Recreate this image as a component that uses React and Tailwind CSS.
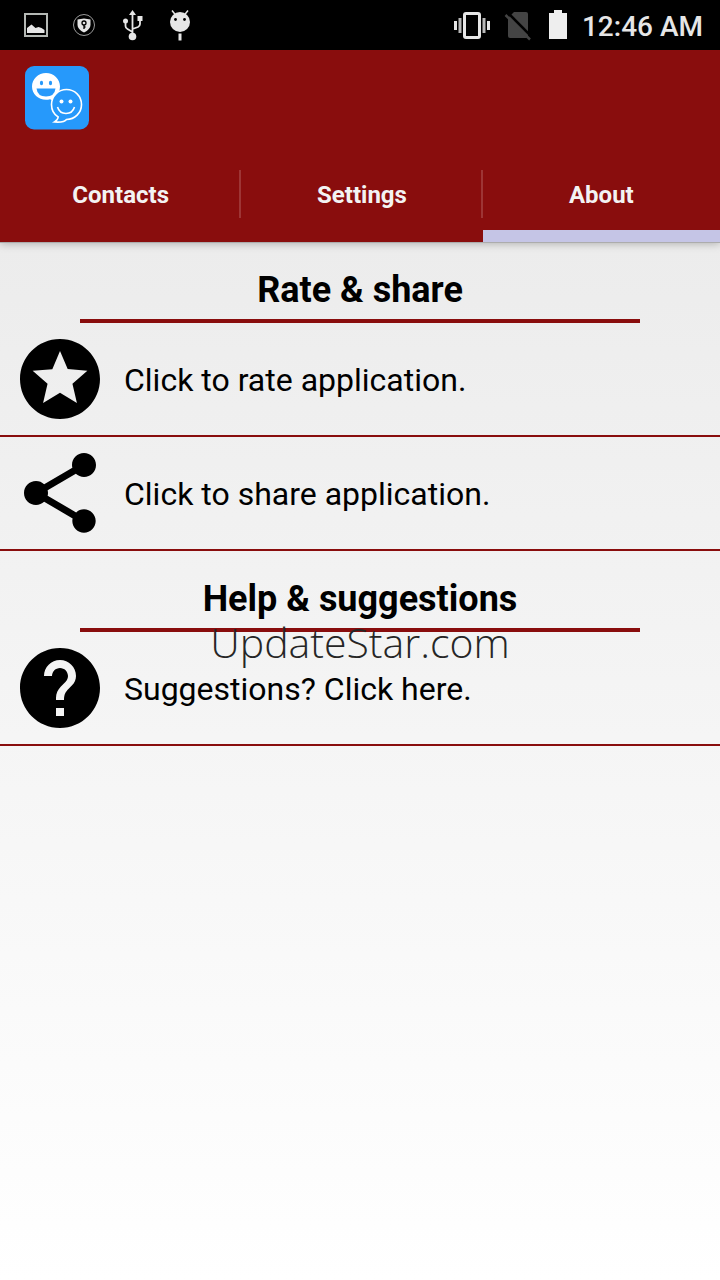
import React, { useState } from 'react';
import clsx from 'clsx';

const TABS = ['Contacts', 'Settings', 'About'];

const StatusBar = () => (
  <div className="flex h-[50px] items-center justify-between bg-black pr-[17px] pl-6 text-[#e6e6e6]">
    <div className="flex items-center gap-6">
      {/* picture */}
      <svg className="h-6 w-6" viewBox="0 0 24 24" fill="none">
        <rect x="1" y="1" width="22" height="22" stroke="#b4b8b4" strokeWidth="2" />
        <path d="M3 20v-5l4.500-3.500 4 3.500 3-1 3 1 3 2v3z" fill="currentColor" />
      </svg>
      {/* shield */}
      <svg className="h-6 w-6" viewBox="0 0 24 24" fill="none">
        <circle cx="12" cy="12" r="10.5" stroke="#9a9a9a" />
        <path d="M12 5.500l6.500 1v5c0 3.500-2.500 6-6.500 8-4-2-6.500-4.500-6.500-8v-5z" fill="currentColor" />
        <circle cx="12" cy="10" r="2" stroke="#000" strokeWidth="1.300" />
        <path d="M12 12v4M12 14h1.500" stroke="#000" strokeWidth="1.300" />
      </svg>
      {/* usb */}
      <svg className="h-8 w-6" viewBox="0 0 24 32" fill="none" stroke="currentColor" strokeWidth="1.800">
        <path d="M12.500 27V5M5.500 12v5q0 2 2 3l5 3M20 9v6q0 2-2 3l-5.500 2" />
        <path d="M12.500 1l3.500 5H9z" fill="currentColor" stroke="none" />
        <circle cx="5.500" cy="12" r="2.500" fill="currentColor" stroke="none" />
        <rect x="17.500" y="7" width="5" height="5" fill="currentColor" stroke="none" />
        <circle cx="12.500" cy="27.500" r="3.800" fill="currentColor" stroke="none" />
      </svg>
      {/* debug head */}
      <svg className="h-8 w-6" viewBox="0 0 24 32" fill="none" stroke="currentColor" strokeWidth="1.500">
        <circle cx="12" cy="13" r="10" fill="currentColor" stroke="none" />
        <path d="M4 1.500l4 5M20 1.500l-4 5" />
        <path d="M12 24.500v7" strokeWidth="3" />
        <circle cx="7.500" cy="10.500" r="1.400" fill="#000" stroke="none" />
        <circle cx="16.500" cy="10.500" r="1.400" fill="#000" stroke="none" />
      </svg>
    </div>
    <div className="flex items-center">
      {/* vibrate */}
      <svg className="h-8 w-9" viewBox="0 0 36 32" fill="none" stroke="currentColor">
        <rect x="10.500" y="4.500" width="15" height="24" rx="1.500" strokeWidth="3" />
        <path d="M1.500 12v9M34.500 12v9" strokeWidth="3" />
        <path d="M6 9v15M30 9v15" strokeWidth="3" stroke="#b8b8b8" />
      </svg>
      {/* no sim */}
      <svg className="ml-3.5 h-8 w-7" viewBox="0 0 28 32">
        <path d="M10 3h12q2 0 2 2v22q0 2-2 2H6q-2 0-2-2V9z" fill="#444" />
        <path d="M3.500 3.500l25 25" stroke="#000" strokeWidth="2.500" />
        <path d="M1.500 6l24.500 24.500" stroke="#444" strokeWidth="2.500" />
      </svg>
      {/* battery */}
      <svg className="ml-4 h-8 w-5" viewBox="0 0 20 32">
        <path d="M6 1h8v3h5v26H1V4h5z" fill="#eee" />
      </svg>
      <span className="ml-3.5 pt-1 text-[28px] leading-8 font-medium">12:46 AM</span>
    </div>
  </div>
);

const AppLogo = () => (
  <svg className="h-16 w-16" viewBox="0 0 64 64" fill="none">
    <rect width="64" height="63.500" rx="9" fill="#2699fb" />
    <path
      d="M21 7c7.800 0 14 6 14 13.500 0 4-1.500 7-3.800 9.300.2 2.500.8 4 2.300 5.700-4 0-6.500-1.200-8.500-2.300-1.300.5-2.600.6-4 .6C13.300 33.800 7 28 7 20.500S13.300 7 21 7z"
      fill="#fff"
    />
    <ellipse cx="16.500" cy="17" rx="1.600" ry="2.200" fill="#2699fb" />
    <ellipse cx="25.500" cy="17" rx="1.600" ry="2.200" fill="#2699fb" />
    <path d="M11.500 22.500h19q-1 8-9.500 8t-9.500-8z" fill="#2699fb" />
    <path
      d="M41.500 23.500c8.300 0 15 6.500 15 15s-6.700 15-15 15c-1.500 2-6 3-12 2.500 2.500-1.500 3.500-3 3.700-5-4.200-2.500-6.700-7.500-6.700-12.500 0-8.500 6.700-15 15-15z"
      fill="#2699fb"
      stroke="#fff"
      strokeWidth="1.600"
    />
    <circle cx="36.500" cy="35.500" r="2" fill="#fff" />
    <circle cx="45.500" cy="35.500" r="2" fill="#fff" />
    <path d="M32.500 41q2 6.500 8.500 6.500t8.500-6.500" stroke="#fff" strokeWidth="1.600" />
  </svg>
);

const SectionTitle = ({ children }) => (
  <h2 className="mx-20 border-b-4 border-[#890d0d] pt-7 pb-[9px] text-center text-[36px] leading-10 font-bold">
    {children}
  </h2>
);

const ActionRow = ({ path, children }) => (
  <button type="button" className="flex w-full items-center gap-4 border-b-2 border-[#890d0d] px-3 py-2 text-left">
    <svg className="h-24 w-24 shrink-0" viewBox="0 0 24 24" fill="currentColor">
      <path d={path} />
    </svg>
    <span className="pt-0.5 text-[32px] leading-9">{children}</span>
  </button>
);

const STAR =
  'M11.990 2C6.470 2 2 6.480 2 12s4.470 10 9.990 10C17.520 22 22 17.520 22 12S17.520 2 11.990 2zm4.240 16L12 15.450 7.770 18l1.120-4.810-3.730-3.230 4.920-.42L12 5l1.920 4.530 4.920.42-3.730 3.230L16.230 18z';
const SHARE =
  'M18 16.080c-.76 0-1.440.3-1.960.77L8.910 12.700c.05-.23.09-.46.09-.7s-.04-.47-.09-.7l7.050-4.110c.54.5 1.250.81 2.040.81 1.660 0 3-1.340 3-3s-1.340-3-3-3-3 1.340-3 3c0 .24.04.47.09.7L8.040 9.810C7.500 9.310 6.790 9 6 9c-1.660 0-3 1.340-3 3s1.340 3 3 3c.79 0 1.500-.31 2.040-.81l7.120 4.160c-.05.21-.08.43-.08.65 0 1.610 1.310 2.920 2.920 2.920 1.610 0 2.920-1.310 2.920-2.920s-1.310-2.920-2.920-2.920z';
const HELP =
  'M12 2C6.480 2 2 6.480 2 12s4.480 10 10 10 10-4.480 10-10S17.520 2 12 2zm1 17h-2v-2h2v2zm2.070-7.750l-.9.920C13.450 12.900 13 13.500 13 15h-2v-.5c0-1.100.45-2.100 1.170-2.830l1.240-1.260c.37-.36.59-.86.59-1.410 0-1.100-.9-2-2-2s-2 .9-2 2H8c0-2.210 1.790-4 4-4s4 1.790 4 4c0 .88-.36 1.680-.93 2.250z';

const App = () => {
  const [active, setActive] = useState('About');

  return (
    <div className="relative flex min-h-screen flex-col font-[Roboto,sans-serif] text-black">
      <StatusBar />
      <header className="relative bg-[#890d0d] shadow-[0_1px_0_#acacac,0_2px_8px_rgba(0,0,0,0.25)]">
        <div className="h-24 px-[25px] py-4">
          <AppLogo />
        </div>
        <nav className="flex h-24">
          {TABS.map((tab, i) => (
            <React.Fragment key={tab}>
              {i > 0 && <div className="mt-6 h-12 w-0.5 bg-[#9e3535]" />}
              <button
                type="button"
                onClick={() => setActive(tab)}
                className={clsx(
                  'flex-1 border-b-[12px] pt-3.5 text-[24px] leading-7 font-bold text-[#f3f3f3]',
                  i < TABS.length - 1 && 'pl-0.5',
                  active === tab ? 'border-[#c5c5e6]' : 'border-transparent'
                )}
              >
                {tab}
              </button>
            </React.Fragment>
          ))}
        </nav>
      </header>

      <main className="flex-1 bg-linear-to-b from-[#ececec] to-white">
        <SectionTitle>Rate &amp; share</SectionTitle>
        <ActionRow path={STAR}>Click to rate application.</ActionRow>
        <ActionRow path={SHARE}>Click to share application.</ActionRow>
        <SectionTitle>Help &amp; suggestions</SectionTitle>
        <ActionRow path={HELP}>Suggestions? Click here.</ActionRow>
      </main>

      {/* watermark */}
      <div className="pointer-events-none absolute inset-0 flex items-center justify-center">
        <span className="pt-1 font-['Open_Sans',sans-serif] text-[41px] leading-10 font-light text-[#262626]">
          UpdateStar.com
        </span>
      </div>
    </div>
  );
};

export default App;
